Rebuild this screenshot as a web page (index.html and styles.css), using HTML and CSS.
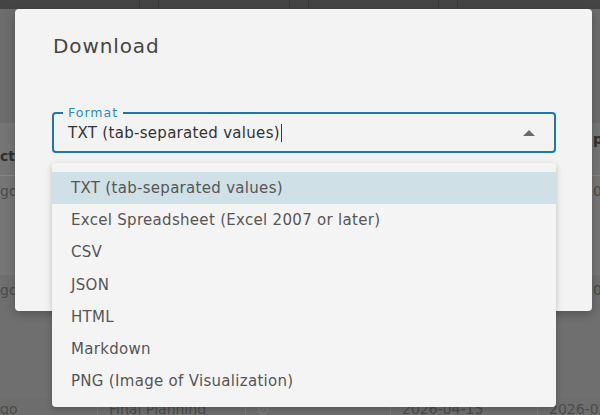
FILE: index.html
```html
<!DOCTYPE html>
<html lang="en">
<head>
<meta charset="utf-8">
<title>Download</title>
<link rel="stylesheet" href="styles.css">
</head>
<body>
<div class="page">
  <div class="topbar">
    <div class="tb-cell tb-a"></div>
    <div class="tb-cell tb-b"></div>
    <div class="tb-cell tb-a2"></div>
    <div class="tb-cell tb-b"></div>
    <div class="tb-cell tb-a2"></div>
    <div class="tb-cell tb-b"></div>
    <div class="tb-cell tb-last"></div>
  </div>
  <div class="spacer"></div>
  <div class="thead">
    <div class="th th-left">ct</div>
    <div class="th th-right">p</div>
  </div>
  <div class="row row1">
    <div class="td td-left">go</div>
    <div class="td td-right">02</div>
  </div>
  <div class="row row2">
    <div class="td td-left">go</div>
    <div class="td td-right">04</div>
  </div>
  <div class="row row3">
    <div class="cell">go</div>
    <div class="cell">Final Planning</div>
    <div class="cell cell-empty">∅</div>
    <div class="cell">2026-04-15</div>
    <div class="cell">2026-02-01</div>
  </div>
</div>

<div class="dialog">
  <h2 class="dialog-title">Download</h2>
  <div class="field">
    <span class="field-label">Format</span>
    <div class="field-value">TXT (tab-separated values)<span class="caret"></span></div>
    <svg class="field-arrow" width="12" height="6" viewBox="0 0 12 6"><path d="M0 6 L6 0 L12 6 Z" fill="#6b6b6b"/></svg>
    <ul class="menu">
      <li class="menu-item selected">TXT (tab-separated values)</li>
      <li class="menu-item">Excel Spreadsheet (Excel 2007 or later)</li>
      <li class="menu-item">CSV</li>
      <li class="menu-item">JSON</li>
      <li class="menu-item">HTML</li>
      <li class="menu-item">Markdown</li>
      <li class="menu-item">PNG (Image of Visualization)</li>
    </ul>
  </div>
</div>
</body>
</html>
```

FILE: styles.css
```css
html, body {
  margin: 0;
  padding: 0;
}
body {
  width: 600px;
  height: 415px;
  overflow: hidden;
  position: relative;
  font-family: "DejaVu Sans", "Liberation Sans", sans-serif;
  background: #717171;
}

/* ---------- dimmed page behind the dialog ---------- */
.page {
  display: flex;
  flex-direction: column;
  height: 415px;
}
.topbar {
  height: 9px;
  flex: none;
  display: grid;
  grid-template-columns: 140px 19px 131px 19px 130px 19px 1fr;
  background: #444444;
}
.tb-cell {
  border-right: 1px solid #393939;
}
.tb-last {
  border-right: none;
}
.spacer {
  height: 114px;
  flex: none;
  background: #6c6c6c;
}
.thead {
  height: 53px;
  flex: none;
  display: grid;
  grid-template-columns: 593px 1fr;
  background: #757575;
  border-bottom: 1px solid #868686;
  box-sizing: border-box;
  font-weight: bold;
  font-size: 14px;
  color: #2f2f2f;
}
.th {
  overflow: hidden;
  white-space: nowrap;
}
.th-left {
  align-self: end;
  padding-bottom: 11px;
}
.th-right {
  padding-top: 8px;
}
.row {
  display: grid;
  grid-template-columns: 593px 1fr;
  font-size: 14px;
  color: #4b4b4b;
  flex: none;
}
.row1 {
  height: 99px;
  background: #767676;
}
.row2 {
  height: 123px;
  background: #6f6f6f;
}
.td {
  overflow: hidden;
  white-space: nowrap;
}
.td-left, .td-right {
  padding-top: 7px;
}
.row3 {
  flex: 1;
  grid-template-columns: 97px 148px 145px 147px 1fr;
  background: #6d6d6d;
}
.cell {
  border-left: 1px solid #7c7c7c;
  padding: 3px 0 0 11px;
  white-space: nowrap;
  overflow: hidden;
}
.row3 .cell:first-child {
  border-left: none;
  padding-left: 0;
}
.cell-empty {
  color: #7f7f7f;
}

/* ---------- dialog ---------- */
.dialog {
  position: absolute;
  left: 15px;
  top: 9px;
  width: 577px;
  height: 302px;
  box-sizing: border-box;
  background: #f3f3f3;
  border-radius: 4px;
  box-shadow: 0 3px 10px rgba(0, 0, 0, 0.25);
  padding: 25px 36px 0 37px;
}
.dialog-title {
  margin: 0;
  font-size: 20px;
  line-height: 24px;
  font-weight: normal;
  letter-spacing: 0.9px;
  color: #454545;
  padding-left: 1px;
}
.field {
  position: relative;
  margin-top: 54px;
  height: 41px;
  box-sizing: border-box;
  border: 2px solid #1b79af;
  border-radius: 4px;
  display: flex;
  align-items: center;
  padding: 0 19px 0 14px;
}
.field-label {
  position: absolute;
  top: -8px;
  left: 9px;
  padding: 0 5px;
  background: #f3f3f3;
  font-size: 12.5px;
  line-height: 14px;
  letter-spacing: 1px;
  color: #2a8bc3;
}
.field-value {
  flex: 1;
  display: flex;
  align-items: center;
  font-size: 15px;
  letter-spacing: 0.3px;
  color: #333333;
  white-space: nowrap;
}
.caret {
  display: inline-block;
  width: 1px;
  height: 18px;
  margin-left: 1px;
  background: #1d3f5a;
}
.field-arrow {
  display: block;
  flex: none;
}

/* ---------- dropdown menu ---------- */
.menu {
  position: absolute;
  top: calc(100% + 12px);
  left: -2px;
  right: -2px;
  margin: 0;
  padding: 9px 0 10px;
  list-style: none;
  background: #f4f4f4;
  border-radius: 4px;
  box-shadow: 0 2px 6px rgba(0, 0, 0, 0.22);
  z-index: 2;
}
.menu-item {
  height: 32.2px;
  line-height: 32.2px;
  padding-left: 19px;
  font-size: 15px;
  letter-spacing: 0.3px;
  color: #565656;
  white-space: nowrap;
}
.menu-item.selected {
  background: #cfe0e7;
}
```
